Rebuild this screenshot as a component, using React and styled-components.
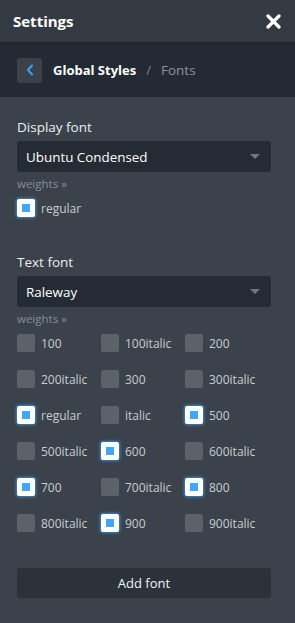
import React from 'react';
import styled, { createGlobalStyle } from 'styled-components';

const GlobalStyle = createGlobalStyle`
  html, body {
    margin: 0;
    padding: 0;
    background: #3b424b;
  }
  body {
    font-family: "Open Sans", "Noto Sans", sans-serif;
  }
`;

const Panel = styled.div`
  width: 295px;
  min-height: 623px;
  background: #3b424b;
  color: #e6e8ea;
`;

const Header = styled.header`
  height: 42px;
  padding: 0 13px;
  display: flex;
  align-items: center;
  justify-content: space-between;
  background: #343a42;
  border-bottom: 1px solid #1e242b;
`;

const Title = styled.h1`
  margin: 0;
  font-size: 15px;
  font-weight: 700;
  color: #ffffff;
`;

const CloseButton = styled.button`
  width: 18px;
  height: 18px;
  padding: 0;
  border: none;
  background: none;
  display: flex;
  align-items: center;
  justify-content: center;
  cursor: pointer;
`;

const Breadcrumb = styled.nav`
  height: 54px;
  padding: 0 17px;
  display: flex;
  align-items: center;
  background: #242a33;
  font-size: 13px;
`;

const BackButton = styled.button`
  width: 25px;
  height: 25px;
  margin-right: 11px;
  padding: 0;
  border: none;
  border-radius: 3px;
  background: #3a4149;
  display: flex;
  align-items: center;
  justify-content: center;
  cursor: pointer;
`;

const Crumb = styled.span`
  font-weight: ${({ $current }) => ($current ? 400 : 700)};
  font-size: ${({ $current }) => ($current ? '13.5px' : '13px')};
  color: ${({ $current }) => ($current ? '#8c929a' : '#ffffff')};
`;

const Separator = styled.span`
  margin: 0 10px;
  color: #7d848c;
`;

const Body = styled.main`
  padding: 20px 24px 24px 17px;
`;

const Section = styled.section`
  margin-bottom: ${({ $last }) => ($last ? '36px' : '35px')};
`;

const Label = styled.div`
  font-size: 13.5px;
  line-height: 20px;
  color: #eceef0;
  margin-bottom: 4px;
`;

const SelectBox = styled.div`
  height: 31px;
  padding: 0 9px;
  border-radius: 3px;
  background: #252b34;
  display: flex;
  align-items: center;
  justify-content: space-between;
  font-size: 13.4px;
  color: #ffffff;
`;

const Caret = styled.span`
  width: 0;
  height: 0;
  margin-right: 2px;
  border-left: 5px solid transparent;
  border-right: 5px solid transparent;
  border-top: 5px solid #70767e;
`;

const WeightsLink = styled.div`
  margin-top: 5px;
  font-size: 11.5px;
  line-height: 14px;
  color: #878d95;
`;

const WeightGrid = styled.div`
  margin-top: 8px;
  display: grid;
  grid-template-columns: repeat(${({ $cols }) => $cols}, 84px);
  row-gap: 18px;
`;

const Option = styled.label`
  display: flex;
  align-items: center;
  height: 18px;
  font-size: 12px;
  color: #c9cdd1;
  cursor: pointer;
`;

const Box = styled.span`
  width: 18px;
  height: 18px;
  margin-right: 6px;
  border-radius: 2px;
  box-sizing: border-box;
  flex-shrink: 0;
  display: flex;
  align-items: center;
  justify-content: center;
  background: ${({ $checked }) => ($checked ? '#ffffff' : '#5c6269')};
  box-shadow: ${({ $checked }) => ($checked ? '0 0 3px 1px rgba(66,165,245,0.7)' : 'none')};

  &::after {
    content: '';
    display: ${({ $checked }) => ($checked ? 'block' : 'none')};
    width: 8px;
    height: 8px;
    background: #42a5f5;
  }
`;

const AddButton = styled.button`
  width: 100%;
  height: 30px;
  border: none;
  border-radius: 3px;
  background: #2c323a;
  color: #f2f3f4;
  font-family: inherit;
  font-size: 13px;
  cursor: pointer;
`;

const textWeights = [
  ['100', false], ['100italic', false], ['200', false],
  ['200italic', false], ['300', false], ['300italic', false],
  ['regular', true], ['italic', false], ['500', true],
  ['500italic', false], ['600', true], ['600italic', false],
  ['700', true], ['700italic', false], ['800', true],
  ['800italic', false], ['900', true], ['900italic', false],
];

const Weight = ({ name, checked }) => (
  <Option>
    <Box $checked={checked} />
    {name}
  </Option>
);

export default function App() {
  return (
    <Panel>
      <GlobalStyle />
      <Header>
        <Title>Settings</Title>
        <CloseButton aria-label="Close">
          <svg width="15" height="15" viewBox="0 0 15 15">
            <path d="M2 2 L13 13 M13 2 L2 13" stroke="#ffffff" strokeWidth="3.2" strokeLinecap="round" />
          </svg>
        </CloseButton>
      </Header>

      <Breadcrumb>
        <BackButton aria-label="Back">
          <svg width="8" height="12" viewBox="0 0 8 12">
            <path d="M6 1.5 L2 6 L6 10.5" fill="none" stroke="#3d9be9" strokeWidth="2.2" strokeLinecap="round" strokeLinejoin="round" />
          </svg>
        </BackButton>
        <Crumb>Global Styles</Crumb>
        <Separator>/</Separator>
        <Crumb $current>Fonts</Crumb>
      </Breadcrumb>

      <Body>
        <Section>
          <Label>Display font</Label>
          <SelectBox>
            Ubuntu Condensed
            <Caret />
          </SelectBox>
          <WeightsLink>weights »</WeightsLink>
          <WeightGrid $cols={1}>
            <Weight name="regular" checked />
          </WeightGrid>
        </Section>

        <Section $last>
          <Label>Text font</Label>
          <SelectBox>
            Raleway
            <Caret />
          </SelectBox>
          <WeightsLink>weights »</WeightsLink>
          <WeightGrid $cols={3}>
            {textWeights.map(([name, checked]) => (
              <Weight key={name} name={name} checked={checked} />
            ))}
          </WeightGrid>
        </Section>

        <AddButton>Add font</AddButton>
      </Body>
    </Panel>
  );
}
